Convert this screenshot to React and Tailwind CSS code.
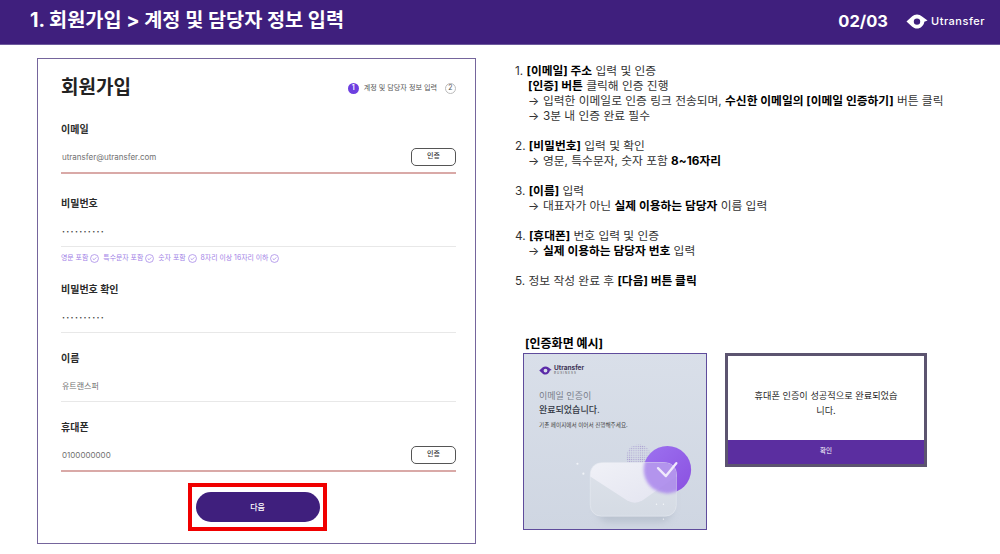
import React from "react";

const KR = "font-['Inter','Noto_Sans_CJK_KR',sans-serif]";

const LogoMark = ({ className, color = "#fff" }) => (
  <svg viewBox="0 0 24 16" className={className}>
    <path
      fill={color}
      fillRule="evenodd"
      d="M0.5 8 L6.5 2.6 C8 1.2 10 0.4 12 0.4 C14 0.4 16 1.2 17.5 2.6 L23.5 7 L20 8.2 C19.4 12.4 16 15.6 12 15.6 C10 15.6 8 14.8 6.5 13.4 Z M12 4.6 A3.5 3.5 0 1 0 12 11.6 A3.5 3.5 0 1 0 12 4.6 Z"
    />
  </svg>
);

const CheckCircle = () => (
  <svg viewBox="0 0 10 10" className="w-[9px] h-[9px] shrink-0" fill="none" stroke="#9f7fe6" strokeWidth="0.8">
    <circle cx="5" cy="5" r="4.4" />
    <path d="M3 5 L4.5 6.4 L7 3.8" />
  </svg>
);

const Field = ({ label, value, line = "gray", button, dots, className = "" }) => (
  <div className={className}>
    <div className="h-4 flex items-center text-[10px] leading-4 font-bold text-[#2b2b2b]">{label}</div>
    <div
      className={
        line === "red"
          ? "h-[37px] pt-1.5 flex items-center justify-between border-b-2 border-[#d9a9a7]"
          : "h-9 pt-1.5 flex items-center justify-between border-b border-[#e8e8e8]"
      }
    >
      {dots ? (
        <span className="ml-px text-[#444] text-[9px] tracking-[1.3px] leading-none font-bold">··········</span>
      ) : (
        <span className="ml-px -mt-0.5 text-[8px] text-[#707070]">{value}</span>
      )}
      {button && (
        <span className="-mt-0.5 w-[45px] h-[18px] flex items-center justify-center rounded-[5px] border border-[#555] text-[7px] font-medium text-[#333]">
          인증
        </span>
      )}
    </div>
  </div>
);

const Hint = ({ children }) => (
  <span className="flex items-center gap-[2px]">
    {children}
    <CheckCircle />
  </span>
);

const Arrow = () => <span className="inline-block w-[15px]">→</span>;

const Steps = () => (
  <div className="text-[11.75px] leading-[15px] text-[#333] whitespace-nowrap">
    <p>1. <b className="text-black">[이메일] 주소</b> 입력 및 인증</p>
    <p className="pl-[13px]"><b className="text-black">[인증] 버튼</b> 클릭해 인증 진행</p>
    <p className="pl-[13px]"><Arrow />입력한 이메일로 인증 링크 전송되며, <b className="text-black">수신한 이메일의 [이메일 인증하기]</b> 버튼 클릭</p>
    <p className="pl-[13px]"><Arrow />3분 내 인증 완료 필수</p>

    <p className="mt-[15px]">2. <b className="text-black">[비밀번호]</b> 입력 및 확인</p>
    <p className="pl-[13px]"><Arrow />영문, 특수문자, 숫자 포함 <b className="text-black">8~16자리</b></p>

    <p className="mt-[15px]">3. <b className="text-black">[이름]</b> 입력</p>
    <p className="pl-[13px]"><Arrow />대표자가 아닌 <b className="text-black">실제 이용하는 담당자</b> 이름 입력</p>

    <p className="mt-[15px]">4. <b className="text-black">[휴대폰]</b> 번호 입력 및 인증</p>
    <p className="pl-[13px]"><Arrow /><b className="text-black">실제 이용하는 담당자 번호</b> 입력</p>

    <p className="mt-[15px]">5. 정보 작성 완료 후 <b className="text-black">[다음] 버튼 클릭</b></p>
  </div>
);

const EnvelopeArt = () => (
  <svg viewBox="0 0 184 177" className="absolute inset-0 w-full h-full">
    <defs>
      <pattern id="dots" width="2.2" height="2.2" patternUnits="userSpaceOnUse">
        <circle cx="1.1" cy="1.1" r="0.6" fill="#a99ccf" />
      </pattern>
      <linearGradient id="env" x1="0" y1="0" x2="0" y2="1">
        <stop offset="0" stopColor="#dde2ea" />
        <stop offset="1" stopColor="#d5dbe4" />
      </linearGradient>
      <linearGradient id="flap" x1="0" y1="0" x2="1" y2="1">
        <stop offset="0" stopColor="#f0f1f7" />
        <stop offset="1" stopColor="#e3e4f0" />
      </linearGradient>
      <linearGradient id="ball" x1="0" y1="0" x2="1" y2="1">
        <stop offset="0" stopColor="#9d72f0" />
        <stop offset="1" stopColor="#8a50e0" />
      </linearGradient>
      <filter id="soft" x="-30%" y="-30%" width="160%" height="170%">
        <feGaussianBlur stdDeviation="4" />
      </filter>
      <filter id="glass" x="-30%" y="-30%" width="160%" height="160%">
        <feGaussianBlur stdDeviation="1.6" />
      </filter>
      <clipPath id="envClip">
        <rect x="67" y="110" width="87" height="54" rx="11" />
      </clipPath>
    </defs>
    <rect x="74" y="128" width="76" height="42" rx="12" fill="#a3adbb" opacity="0.5" filter="url(#soft)" />
    <circle cx="116" cy="104" r="12.5" fill="url(#dots)" />
    <circle cx="145" cy="117" r="24" fill="url(#ball)" />
    <rect x="67" y="110" width="87" height="54" rx="11" fill="url(#env)" stroke="#e8ebf1" strokeWidth="0.6" />
    <path d="M67 124 Q67 110 81 110 H140 Q154 110 154 124 L120 148 Q112 153 104 148 Z" fill="url(#flap)" />
    <g clipPath="url(#envClip)">
      <circle cx="145" cy="117" r="24" fill="#a57fec" opacity="0.8" filter="url(#glass)" />
    </g>
    <path d="M135.5 115.5 L143.5 123.5 L154 110.5" fill="none" stroke="#f0e9fc" strokeWidth="2.4" strokeLinecap="round" strokeLinejoin="round" />
    <circle cx="54" cy="111" r="1.1" fill="#f0f3f7" />
    <circle cx="60" cy="121" r="1.1" fill="#f0f3f7" />
    <circle cx="134" cy="152" r="0.7" fill="#f5f7fa" />
    <circle cx="141" cy="152" r="0.7" fill="#f5f7fa" />
    <circle cx="141" cy="167" r="0.7" fill="#f5f7fa" />
  </svg>
);

const App = () => {
  return (
    <div className={`w-[1000px] h-[554px] bg-white overflow-hidden ${KR}`}>
      <header className="h-[45px] pb-0.5 bg-[#3f1f7d] flex items-center justify-between pl-[30px] pr-[15px] text-white border-b border-[#6d5a9c]">
        <h1 className="text-[19.7px] font-bold leading-none">1. 회원가입 &gt; 계정 및 담당자 정보 입력</h1>
        <div className="flex items-center">
          <span className="text-[16.5px] font-bold mr-[18px]">02/03</span>
          <LogoMark className="w-[22px] h-[15px] mr-[3px]" />
          <span className="w-[54px] text-[11px] font-medium tracking-[0.5px]">Utransfer</span>
        </div>
      </header>

      <main className="flex items-start pt-[13px] pl-[37px]">
        {/* signup form */}
        <section className="w-[439px] h-[486px] border border-[#75659c] pl-[23px] pr-[19px] shrink-0">
          <div className="h-14 pt-0.5 flex items-center justify-between">
            <h2 className="text-[19px] font-bold text-[#222]">회원가입</h2>
            <div className="flex items-center text-[7.1px] text-[#555]">
              <span className="w-[11px] h-[11px] rounded-full bg-[#6d3fe0] text-white flex items-center justify-center text-[7px] font-semibold">1</span>
              <span className="ml-[5px] mr-2">계정 및 담당자 정보 입력</span>
              <span className="w-[11px] h-[11px] rounded-full border border-[#bbb] flex items-center justify-center text-[7px]">2</span>
            </div>
          </div>

          <Field className="mt-1.5" label="이메일" value="utransfer@utransfer.com" line="red" button />
          <Field className="mt-[21px]" label="비밀번호" dots />
          <div className="h-[34px] flex pt-[5px] gap-1 items-start text-[6.9px] leading-3 text-[#9f7fe6]">
            <Hint>영문 포함</Hint>
            <Hint>특수문자 포함</Hint>
            <Hint>숫자 포함</Hint>
            <Hint>8자리 이상 16자리 이하</Hint>
          </div>
          <Field label="비밀번호 확인" dots />
          <Field className="mt-[17px]" label="이름" value="유트랜스퍼" />
          <Field className="mt-[17px]" label="휴대폰" value="0100000000" line="red" button />

          <div className="mt-[11px] ml-[127px] w-[139px] h-[48px] border-4 border-[#f00000] flex items-center justify-center">
            <button className="w-[124px] h-[30px] rounded-full bg-[#3f1f7d] text-white text-[8px] font-medium">다음</button>
          </div>
        </section>

        {/* guide */}
        <section className="ml-[39px] pt-1.5">
          <Steps />
          <div className="ml-[10px] mt-[47px] text-[12px] leading-[15px] font-bold text-black">[인증화면 예시]</div>
          <div className="ml-2 mt-[2px] flex items-start gap-[18px]">
            <div className="relative w-[184px] h-[177px] border border-[#5f4c9c] bg-gradient-to-b from-[#d9dfe9] to-[#cfd6e2] pl-[15px] pt-[11px] overflow-hidden">
              <EnvelopeArt />
              <div className="relative flex items-center gap-[2px]">
                <LogoMark className="w-[13px] h-[9px]" color="#5b2aa8" />
                <div>
                  <div className="text-[6.5px] leading-[7px] font-bold text-[#3c3355]">Utransfer</div>
                  <div className="text-[3px] leading-[3px] tracking-[1px] text-[#555]">BUSINESS</div>
                </div>
              </div>
              <div className="relative mt-[14px] text-[9px] leading-[14px] text-[#777d8a]">이메일 인증이</div>
              <div className="relative text-[9px] leading-[14px] font-medium text-[#333844]">완료되었습니다.</div>
              <div className="relative mt-[4px] text-[5.6px] leading-[8px] text-[#444]">기존 페이지에서 이어서 진행해주세요.</div>
            </div>

            <div className="w-[202px] h-[114px] border-[3px] border-[#5c5470] bg-white flex flex-col">
              <div className="h-[84px] flex items-center justify-center text-center text-[9.2px] leading-[15px] text-[#2b2b2b] px-6 pt-[9px]">
                <span>휴대폰 인증이 성공적으로 완료되었습<br />니다.</span>
              </div>
              <div className="flex-1 bg-[#5b2ea0] text-white text-[6.5px] flex items-center justify-center">확인</div>
            </div>
          </div>
        </section>
      </main>
    </div>
  );
};

export default App;
